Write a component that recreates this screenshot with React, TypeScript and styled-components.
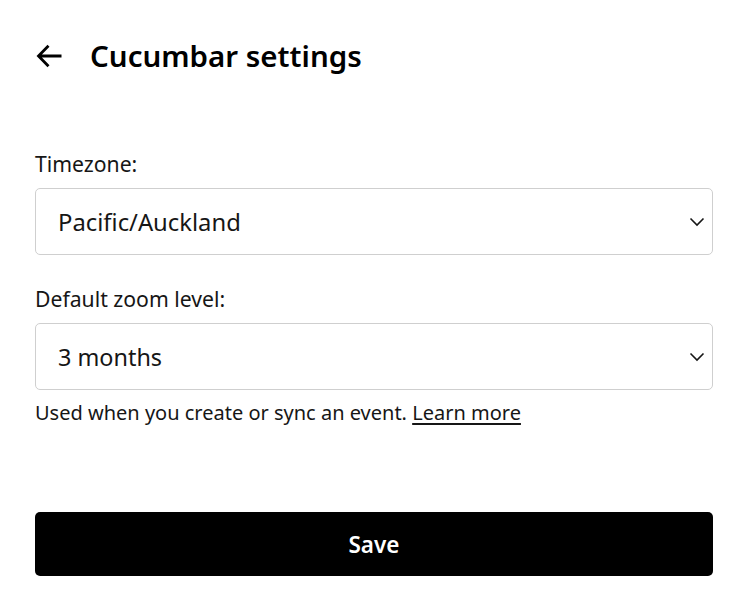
import React from "react";
import styled, { createGlobalStyle } from "styled-components";

const Global = createGlobalStyle`
  html, body { margin: 0; padding: 0; background: #fff; }
  body { font-family: "Noto Sans", "Open Sans", sans-serif; color: #161616; }
  * { box-sizing: border-box; }
`;

const Page = styled.div`
  width: 750px;
  padding: 0 37px 0 35px;
`;

const Header = styled.header`
  display: flex;
  align-items: center;
  gap: 28px;
  height: 112px;
  padding-left: 1px;
  padding-bottom: 1px;
`;

const BackButton = styled.button`
  display: flex;
  align-items: center;
  justify-content: center;
  width: 26px;
  height: 24px;
  padding: 0;
  border: 0;
  background: none;
  color: #000;
  cursor: pointer;
`;

const Title = styled.h1`
  margin: 0;
  font-size: 29.5px;
  font-weight: 600;
  color: #000;
  letter-spacing: 0;
`;

const Form = styled.form`
  display: flex;
  flex-direction: column;
  padding-top: 38px;
`;

const Field = styled.div<{ $mt: number }>`
  display: flex;
  flex-direction: column;
  margin-top: ${(p) => p.$mt}px;
`;

const Label = styled.label`
  font-size: 21.2px;
  line-height: 28px;
  color: #161616;
  margin-bottom: 10px;
`;

const SelectBox = styled.div<{ $size: number }>`
  position: relative;
  height: 67px;
  border: 1.5px solid #cfcfcf;
  border-radius: 5px;
  display: flex;
  align-items: center;
  padding: 0 22px;
  font-size: ${(p) => p.$size}px;
  color: #161616;
`;

const Chevron = styled.svg`
  position: absolute;
  right: 7px;
  top: 50%;
  transform: translateY(-50%);
`;

const Help = styled.p`
  margin: 11px 0 0;
  font-size: 20px;
  line-height: 24px;
  color: #161616;
`;

const HelpLink = styled.a`
  color: #161616;
  text-decoration: underline;
  text-underline-offset: 3px;
`;

const SaveButton = styled.button`
  margin-top: 87px;
  height: 64px;
  border: 0;
  border-radius: 5px;
  background: #000;
  color: #fff;
  font-family: inherit;
  font-size: 22.5px;
  font-weight: 600;
  cursor: pointer;
`;

function Select({ value, size }: { value: string; size: number }) {
  return (
    <SelectBox $size={size}>
      {value}
      <Chevron width="16" height="10" viewBox="0 0 16 10" fill="none">
        <path d="M1.5 1.5 L8 8 L14.5 1.5" stroke="#161616" strokeWidth="1.6" />
      </Chevron>
    </SelectBox>
  );
}

export default function App() {
  return (
    <>
      <Global />
      <Page>
        <Header>
          <BackButton aria-label="Back">
            <svg width="26" height="24" viewBox="0 0 26 24" fill="none">
              <path d="M12.5 1.8 L2.5 12 L12.5 22.2 M2.5 12 H25.5" stroke="#000" strokeWidth="2.8" strokeLinejoin="miter" />
            </svg>
          </BackButton>
          <Title>Cucumbar settings</Title>
        </Header>
        <Form onSubmit={(e) => e.preventDefault()}>
          <Field $mt={0}>
            <Label>Timezone:</Label>
            <Select value="Pacific/Auckland" size={23.8} />
          </Field>
          <Field $mt={30}>
            <Label>Default zoom level:</Label>
            <Select value="3 months" size={23.4} />
            <Help>
              Used when you create or sync an event. <HelpLink href="#">Learn more</HelpLink>
            </Help>
          </Field>
          <SaveButton type="submit">Save</SaveButton>
        </Form>
      </Page>
    </>
  );
}
